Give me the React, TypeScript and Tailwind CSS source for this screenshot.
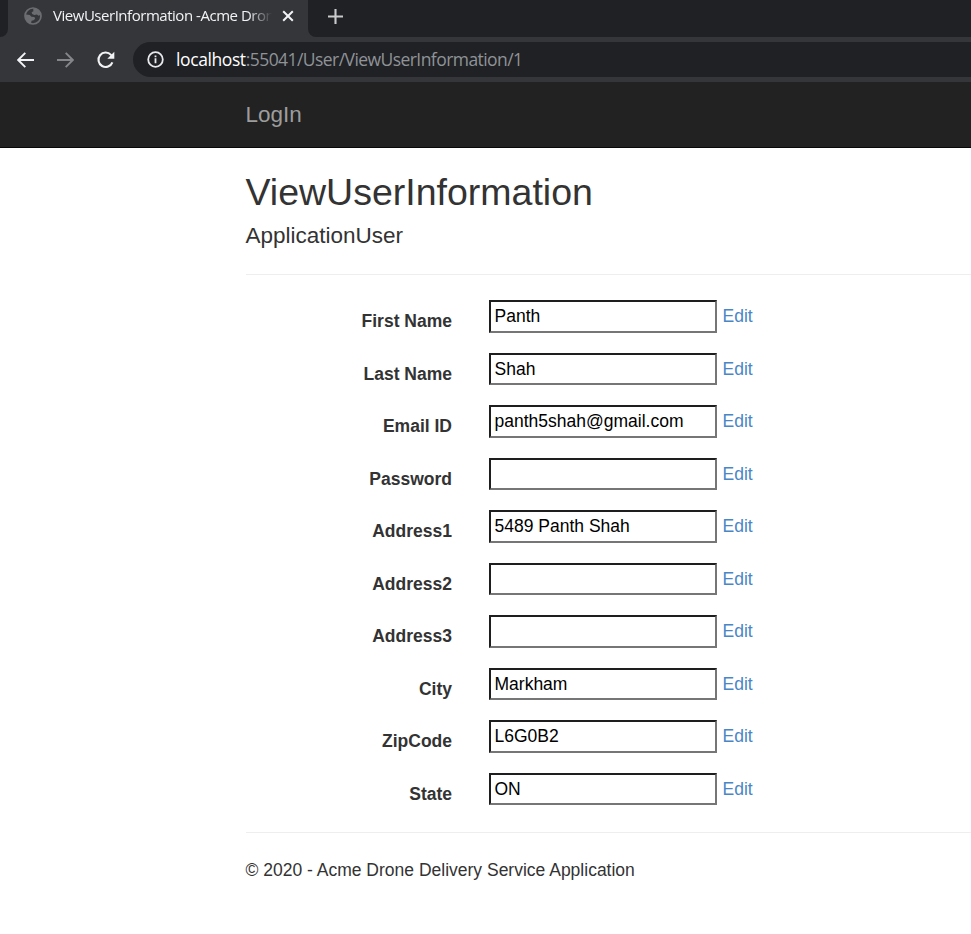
const fields: { label: string; value: string }[] = [
  { label: "First Name", value: "Panth" },
  { label: "Last Name", value: "Shah" },
  { label: "Email ID", value: "panth5shah@gmail.com" },
  { label: "Password", value: "" },
  { label: "Address1", value: "5489 Panth Shah" },
  { label: "Address2", value: "" },
  { label: "Address3", value: "" },
  { label: "City", value: "Markham" },
  { label: "ZipCode", value: "L6G0B2" },
  { label: "State", value: "ON" },
];

function GlobeIcon() {
  return (
    <svg className="ml-[15px] shrink-0" width="20" height="20" viewBox="0 0 20 20">
      <circle cx="10" cy="10" r="8" fill="none" stroke="#6b6d70" strokeWidth="1.7" />
      <path d="M2 9 3.2 8.6l3.6.3 1.6 1.9 3 .3.8 1.6-1.6 1.5-2 .6-.6 2.2-1.4.6-2-1.8L2.4 13Z M10.2 2.4l3.4.4 2.8 2.6 1.3 3.4-2.2 1-1.6-1.4-2.6.5-2.2-.8-.5-1.8 1.8-1Z" fill="#6b6d70" />
    </svg>
  );
}

function TabStrip() {
  return (
    <div className="flex h-[37px] bg-[#35363a]">
      <div className="w-[8px] rounded-br-[8px] bg-[#202124]" />
      <div className="flex w-[300px] items-center pb-[5px]">
        <GlobeIcon />
        <div className="ml-[10px] w-[219px] overflow-hidden pb-[2px] whitespace-nowrap [mask-image:linear-gradient(to_right,black_89%,transparent)] font-['Open_Sans',sans-serif] text-[15px] leading-[22px] tracking-[-0.47px] text-[#f1f3f4]">
          ViewUserInformation -Acme Drone
        </div>
        <svg className="ml-[10px] shrink-0" width="12" height="12" viewBox="0 0 12 12" stroke="#f1f3f4" strokeWidth="2">
          <path d="M1.2 1.2l9.6 9.6M10.8 1.2 1.2 10.8" />
        </svg>
      </div>
      <div className="flex flex-1 items-center rounded-bl-[8px] bg-[#202124] pb-[5px] pl-[20px]">
        <svg width="15" height="15" viewBox="0 0 15 15" stroke="#c9cacc" strokeWidth="2.1">
          <path d="M7.5 0v15M0 7.5h15" />
        </svg>
      </div>
    </div>
  );
}

function Toolbar() {
  return (
    <div className="flex h-[45px] items-center bg-[#35363a]">
      <svg className="ml-[17px] shrink-0" width="17" height="16" viewBox="0 0 17 16" fill="none" stroke="#f1f3f4" strokeWidth="1.9">
        <path d="M17 8H1.5M8.3.8 1.2 8l7.1 7.2" />
      </svg>
      <svg className="ml-[23px] shrink-0" width="17" height="16" viewBox="0 0 17 16" fill="none" stroke="#85868a" strokeWidth="1.9">
        <path d="M0 8h15.5M8.7.8 15.8 8l-7.1 7.2" />
      </svg>
      <svg className="ml-[22px] shrink-0" width="20" height="20" viewBox="0 0 20 20">
        <path d="M16.4 12.3A7.2 7.2 0 1 1 15 4.9l1.4 1.4" fill="none" stroke="#f1f3f4" strokeWidth="2.1" />
        <path d="M18.3 1.8v7h-7Z" fill="#f1f3f4" />
      </svg>
      <div className="ml-[17px] flex h-[35px] flex-1 items-center rounded-l-full bg-[#202124] pl-[14px]">
        <svg width="17" height="17" viewBox="0 0 17 17">
          <circle cx="8.5" cy="8.5" r="7.3" fill="none" stroke="#e8eaed" strokeWidth="1.8" />
          <path d="M7.6 7.3h1.8v5H7.6zM7.6 4.5h1.8v1.8H7.6z" fill="#e8eaed" />
        </svg>
        <div className="ml-[12px] pb-[2px] whitespace-nowrap font-['Open_Sans',sans-serif] text-[17.5px] leading-[24px] tracking-[-0.56px] text-[#8f9398]">
          <span className="tracking-[-0.4px] text-white">localhost</span>:55041/User/ViewUserInformation/1
        </div>
      </div>
    </div>
  );
}

export default function App() {
  return (
    <div className="h-[934px] w-full overflow-hidden bg-white font-['Liberation_Sans',Arial,sans-serif] text-[17.5px] leading-[25px] text-[#333]">
      <TabStrip />
      <Toolbar />
      <nav className="flex h-[66px] items-center border-b border-[#080808] bg-[#222] pl-[245.5px]">
        <a className="text-[22.5px] text-[#9d9d9d]">LogIn</a>
      </nav>
      <main className="pl-[245.5px]">
        <h2 className="pt-[24px] text-[37.5px] leading-[41px]">ViewUserInformation</h2>
        <h4 className="mt-[10px] text-[22.5px] leading-[25px]">ApplicationUser</h4>
        <hr className="mt-[26px] border-[#eee]" />
        <form className="mt-[25px] flex flex-col gap-[20px]">
          {fields.map(({ label, value }) => (
            <div key={label} className="flex h-[32.5px] items-center">
              <label className="w-[206.5px] pt-[11px] text-right font-bold">{label}</label>
              <input
                aria-label={label}
                defaultValue={value}
                className="ml-[37px] h-[32.5px] w-[228px] border-2 border-t-[#1e1e1e] border-r-[#767676] border-b-[#767676] border-l-[#1e1e1e] bg-white pt-[0.5px] pr-1 pl-[3.5px] text-black outline-none"
              />
              <a className="ml-[5.5px] pt-px text-[#4a86c5]">Edit</a>
            </div>
          ))}
        </form>
        <hr className="mt-[27px] border-[#eee]" />
        <footer className="mt-[25px]">© 2020 - Acme Drone Delivery Service Application</footer>
      </main>
    </div>
  );
}
